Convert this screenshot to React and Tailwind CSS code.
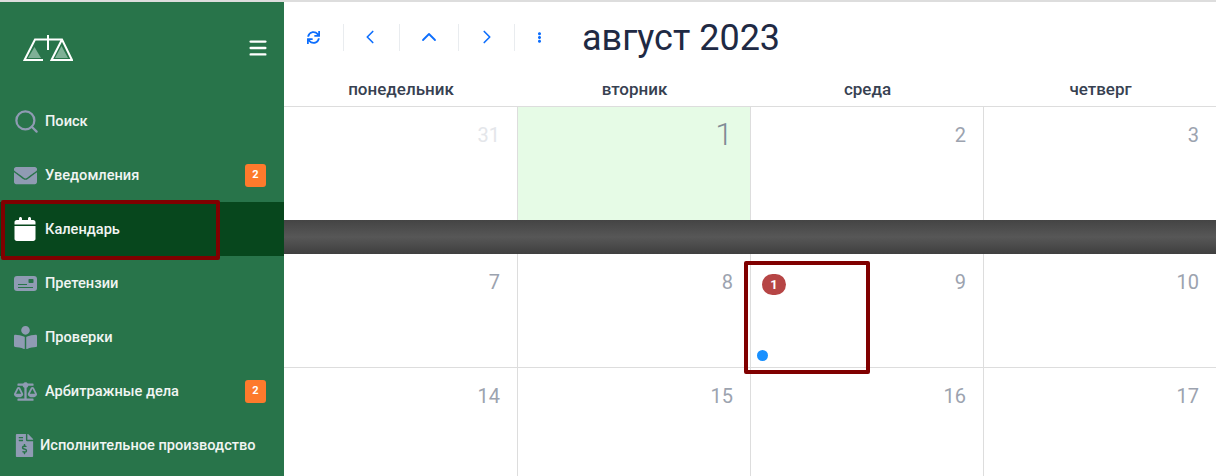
import React from "react";
import { FaEnvelope, FaBookReader, FaBalanceScale, FaFileInvoiceDollar, FaSync, FaEllipsisV } from "react-icons/fa";
import { FaCalendar } from "react-icons/fa6";
import { ChevronLeft, ChevronRight, ChevronUp, Search, Menu } from "lucide-react";

const iconCls = "text-[#8f9bb3]";

function ClaimIcon() {
  return (
    <svg width="23" height="15" viewBox="0 0 23 15">
      <rect width="23" height="15" rx="3" fill="#8f9bb3" />
      <path d="M4 8.500H13M4 11.500H19" stroke="#28744a" strokeWidth="1.200" fill="none" />
      <rect x="14.500" y="3" width="5" height="4" rx="0.800" fill="#28744a" />
    </svg>
  );
}

const nav = [
  { label: "Поиск", icon: <Search size={27} strokeWidth={2} className="ml-[-1px] text-[#8f9bb3]" /> },
  { label: "Уведомления", icon: <FaEnvelope size={23} className={iconCls} />, badge: 2 },
  { label: "Календарь", icon: <FaCalendar size={24} className="ml-[-1px] text-white" />, active: true },
  { label: "Претензии", icon: <ClaimIcon /> },
  { label: "Проверки", icon: <FaBookReader size={23} className={iconCls} /> },
  { label: "Арбитражные дела", icon: <FaBalanceScale size={23} className={iconCls} />, badge: 2 },
  { label: "Исполнительное производство", icon: <FaFileInvoiceDollar size={23} className={`${iconCls} ml-[-1px]`} />, tight: true },
];

const weeks = [
  [{ d: 31, muted: true }, { d: 1, today: true }, { d: 2 }, { d: 3 }],
  [{ d: 7 }, { d: 8 }, { d: 9, event: true }, { d: 10 }],
  [{ d: 14 }, { d: 15 }, { d: 16 }, { d: 17 }],
];

function ToolBtn({ children, className = "" }) {
  return <div className={`flex h-[27px] items-center justify-center text-[#0d6efd] ${className}`}>{children}</div>;
}

function Week({ cells, className }) {
  return (
    <div className={`grid grid-cols-[234px_233px_233px_233px] ${className}`}>
      {cells.map((c) => (
        <div key={c.d} className={`relative border-r border-[#dddddd] ${c.today ? "bg-[#e6fbe6]" : ""}`}>
          <div
            className={`pr-[17px] text-right ${
              c.today ? "pt-[7px] text-[32px] font-light leading-[40px] text-[#808b96]" : c.muted ? "pt-[16px] text-[20px] leading-[24px] text-[#e4e6ea]" : "pt-[16px] text-[20px] leading-[24px] text-[#9ca3af]"
            }`}
          >
            {c.d}
          </div>
          {c.event && (
            <>
              <div className="absolute left-[11px] top-[20px] flex h-[21px] w-[24px] items-center justify-center rounded-full bg-[#b64545] text-[13px] font-bold text-white">
                1
              </div>
              <div className="absolute left-[6px] top-[96px] h-[11px] w-[11px] rounded-full bg-[#1890ff]" />
            </>
          )}
        </div>
      ))}
    </div>
  );
}

export default function App() {
  return (
    <div className="relative h-[476px] w-[1216px] overflow-hidden bg-white font-['Roboto',sans-serif]">
      <div className="h-[2px] bg-[#dddddd]" />
      <div className="flex h-[474px]">
        <aside className="w-[284px] shrink-0 bg-[#28744a]">
          <div className="flex h-[92px] items-center justify-between pl-[23px] pr-[15px]">
            <svg width="50" height="26" viewBox="0 0 50 26">
              <path d="M5 23H18L11.500 12z" fill="#7fb096" />
              <path d="M32 23H45L38.500 11z" fill="#7fb096" />
              <path d="M20 25H1.500L12 4.500H39L49 25H28.500L39 4.500" fill="none" stroke="#fff" strokeWidth="2" />
              <path d="M25 0v15" stroke="#fff" strokeWidth="2" />
            </svg>
            <Menu size={22} strokeWidth={2.600} className="text-white" />
          </div>
          <nav>
            {nav.map((n) => (
              <div key={n.label} className={`flex h-[54px] items-center pl-[14px] pr-[18px] ${n.active ? "bg-[#07471d]" : ""}`}>
                <div className={`flex ${n.tight ? "w-[26px]" : "w-[31px]"} shrink-0 items-center`}>{n.icon}</div>
                <span className="flex-1 whitespace-nowrap pt-[2px] text-[14.600px] font-medium text-[#f1f5f3]">{n.label}</span>
                {n.badge && (
                  <span className="flex h-[23px] w-[21px] items-center justify-center rounded-[3px] bg-[#fd7a2c] text-[11px] font-bold text-white">
                    {n.badge}
                  </span>
                )}
              </div>
            ))}
          </nav>
        </aside>
        <main className="min-w-0 flex-1">
          <div className="flex h-[70px] items-center">
            <div className="flex items-center">
              <ToolBtn className="w-[60px] border-r border-[#e9ecef]"><FaSync size={13} /></ToolBtn>
              <ToolBtn className="w-[56px] border-r border-[#e9ecef] pr-[3px]"><ChevronLeft size={22} strokeWidth={1.800} /></ToolBtn>
              <ToolBtn className="w-[59px] border-r border-[#e9ecef]"><ChevronUp size={24} strokeWidth={1.800} /></ToolBtn>
              <ToolBtn className="w-[56px] border-r border-[#e9ecef]"><ChevronRight size={22} strokeWidth={1.800} /></ToolBtn>
              <ToolBtn className="w-[50px] pr-[2px]"><FaEllipsisV size={11} /></ToolBtn>
            </div>
            <h1 className="ml-[17px] mt-[2px] text-[36px] font-normal leading-none text-[#1f2a44]">август 2023</h1>
          </div>
          <div className="grid h-[35px] grid-cols-[234px_233px_233px_233px] border-b border-[#dddddd] text-center text-[17px] font-medium leading-[34px] text-[#374151]">
            <div>понедельник</div>
            <div>вторник</div>
            <div>среда</div>
            <div>четверг</div>
          </div>
          <Week cells={weeks[0]} className="h-[113px]" />
          <div className="h-[34px] bg-gradient-to-b from-[#444444] via-[#575757] to-[#3f3f3f]" />
          <Week cells={weeks[1]} className="h-[114px] border-b border-[#dddddd]" />
          <Week cells={weeks[2]} className="h-[108px]" />
        </main>
      </div>
      <div className="absolute left-[1px] top-[200px] h-[60px] w-[219px] rounded-[2px] border-[4px] border-[#800000]" />
      <div className="absolute left-[744px] top-[261px] h-[113px] w-[126px] rounded-[2px] border-[4px] border-[#800000]" />
    </div>
  );
}
